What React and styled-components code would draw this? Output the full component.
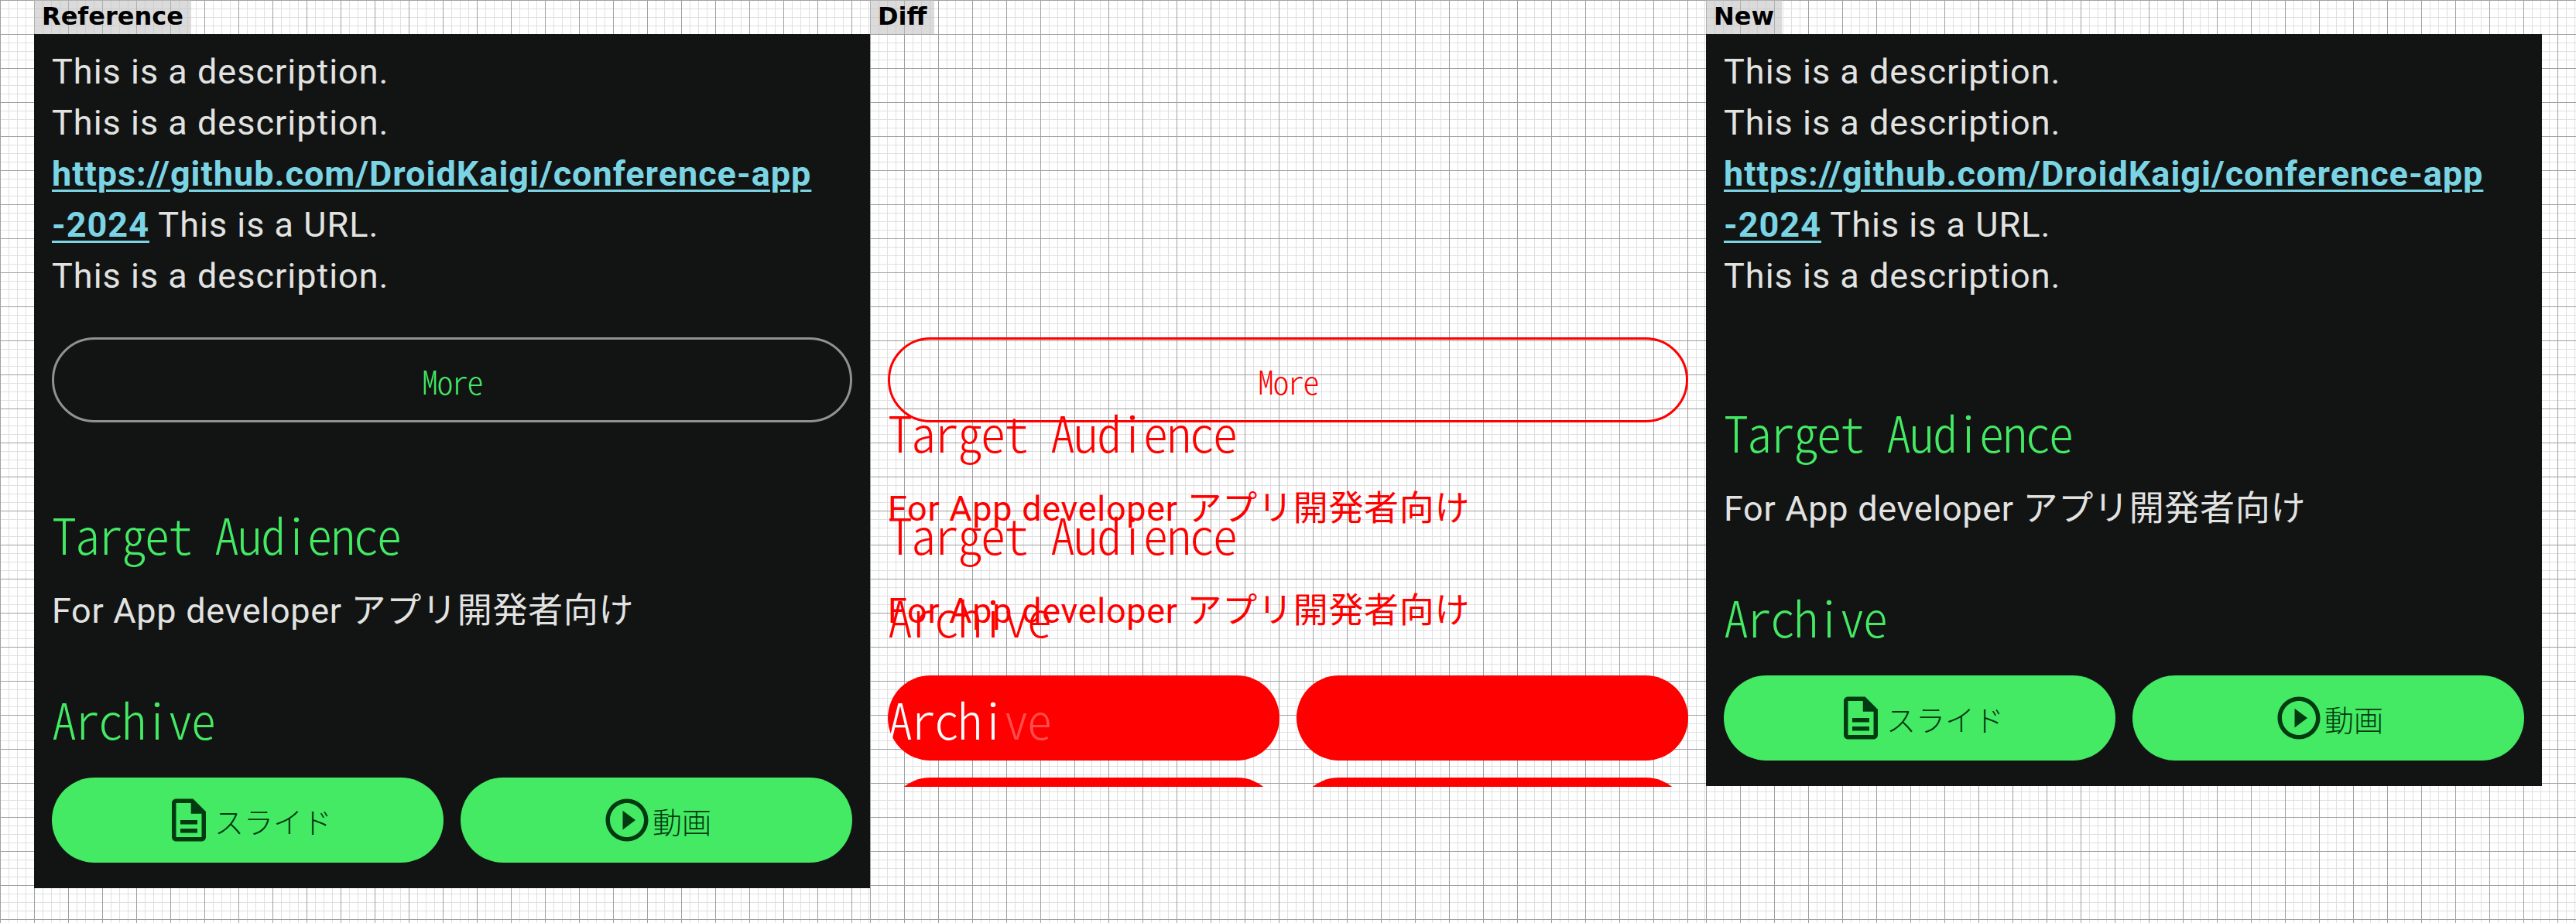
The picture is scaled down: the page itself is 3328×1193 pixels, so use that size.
import React from "react";
import styled, { createGlobalStyle, css } from "styled-components";

const GlobalStyle = createGlobalStyle`
  html, body { margin: 0; padding: 0; background: #fff; }
  body {
    width: 3328px;
    height: 1193px;
    overflow: hidden;
  }
`;

const pixelFont = css`
  font-family: "Noto Sans CJK JP", monospace;
  font-feature-settings: "hwid";
  font-weight: 300;
`;

const Stage = styled.div`
  display: flex;
  height: 1193px;
`;

const Column = styled.section`
  flex: none;
  width: ${(p) => p.$width}px;
  height: 100%;
  padding-left: ${(p) => p.$inset || 0}px;
  box-sizing: border-box;
  background-image:
    linear-gradient(to right, #a0a0a0 1px, transparent 1px),
    linear-gradient(to bottom, #a0a0a0 1px, transparent 1px),
    linear-gradient(to right, #e0e0e0 1px, transparent 1px),
    linear-gradient(to bottom, #e0e0e0 1px, transparent 1px);
  background-size: 44px 44px, 44px 44px, 11px 11px, 11px 11px;
`;

const Frame = styled.div`
  width: 1080px;
`;

const Label = styled.div`
  display: inline-block;
  height: 44px;
  line-height: 42px;
  padding: 0 10px;
  box-sizing: border-box;
  vertical-align: top;
  background: rgba(190, 190, 190, 0.55);
  color: #000;
  font-family: "DejaVu Sans", sans-serif;
  font-weight: 700;
  font-size: 32px;
`;

const Panel = styled.div`
  background: #121414;
`;

const DiffPanel = styled.div`
  position: relative;
  height: 973px;
  overflow: hidden;
`;

const DiffLayer = styled.div`
  position: absolute;
  inset: 0;
`;

const Sheet = styled.div`
  display: flex;
  flex-direction: column;
  padding: 16px 23px 33px;
  color: ${(p) => (p.$diff ? "#ff0000" : "#e2e3e1")};
  font-family: "Roboto", "Noto Sans CJK JP", sans-serif;
`;

const Description = styled.p`
  margin: 0;
  font-size: 45px;
  line-height: 66px;
  letter-spacing: 1px;
  visibility: ${(p) => (p.$diff ? "hidden" : "visible")};
`;

const UrlLink = styled.a`
  color: #7ad4e3;
  font-weight: 700;
  text-decoration: underline;
  text-decoration-thickness: 3px;
  text-underline-offset: 5px;
`;

const MoreButton = styled.button`
  display: block;
  width: 100%;
  height: 110px;
  margin: 46px 0 0;
  padding: 0;
  box-sizing: border-box;
  background: transparent;
  border: 3px solid ${(p) => (p.$diff ? "#ff0000" : "#8e9291")};
  border-radius: 55px;
  color: ${(p) => (p.$diff ? "#ff0000" : "#44ea63")};
  ${pixelFont}
  font-size: 42px;
  letter-spacing: -1.5px;
`;

const Heading = styled.h2`
  margin: 0;
  color: ${(p) => p.$color || (p.$diff ? "#ff0000" : "#44ea63")};
  ${pixelFont}
  font-size: 64px;
  letter-spacing: -2px;
  line-height: 72px;
`;

const Fade = styled.span`
  opacity: 0.3;
`;

const AudienceSection = styled.div`
  margin-top: ${(p) => (p.$afterMore ? "107px" : "131px")};
`;

const AudienceText = styled.p`
  margin: 32px 0 0;
  font-size: 45px;
  line-height: 66px;
  letter-spacing: 0.7px;
`;

const ArchiveSection = styled.div`
  margin-top: 69px;
`;

const Actions = styled.div`
  display: grid;
  grid-template-columns: 1fr 1fr;
  gap: 22px;
  margin-top: 41px;
`;

const Pill = styled.button`
  display: flex;
  align-items: center;
  justify-content: center;
  height: 110px;
  padding: 0;
  border: 0;
  border-radius: 55px;
  background: ${(p) => (p.$diff ? "#ff0000" : "#44ea63")};
  color: ${(p) => (p.$diff ? "#ff0000" : "#003a10")};
  ${pixelFont}
  font-size: 38px;
`;

const Icon = styled.svg`
  width: 66px;
  height: 66px;
  flex: none;
  fill: currentColor;
`;

const DocIcon = () => (
  <Icon viewBox="0 0 24 24">
    <path d="M8 16h8v2H8zm0-4h8v2H8zm6-10H6c-1.1 0-2 .9-2 2v16c0 1.1.89 2 1.99 2H18c1.1 0 2-.9 2-2V8l-6-6zm4 18H6V4h7v5h5v11z" />
  </Icon>
);

const PlayIcon = () => (
  <Icon viewBox="0 0 24 24">
    <path d="M10 16.5l6-4.5-6-4.5zM12 2C6.48 2 2 6.48 2 12s4.48 10 10 10 10-4.48 10-10S17.52 2 12 2zm0 18c-4.41 0-8-3.59-8-8s3.59-8 8-8 8 3.59 8 8-3.59 8-8 8z" />
  </Icon>
);

const Content = ({ more, diff, archive }) => (
  <Sheet $diff={diff}>
    <Description $diff={diff}>
      This is a description.
      <br />
      This is a description.
      <br />
      <UrlLink href="#">
        https://github.com/DroidKaigi/conference-app
        <wbr />
        -2024
      </UrlLink>{" "}
      This is a URL.
      <br />
      This is a description.
    </Description>
    {more && <MoreButton $diff={diff}>More</MoreButton>}
    <AudienceSection $afterMore={more}>
      <Heading $diff={diff}>Target Audience</Heading>
      <AudienceText>For App developer アプリ開発者向け</AudienceText>
    </AudienceSection>
    <ArchiveSection>
      {archive || <Heading $diff={diff}>Archive</Heading>}
      <Actions>
        <Pill $diff={diff}>
          <DocIcon />
          スライド
        </Pill>
        <Pill $diff={diff}>
          <PlayIcon />
          動画
        </Pill>
      </Actions>
    </ArchiveSection>
  </Sheet>
);

export default function App() {
  return (
    <>
      <GlobalStyle />
      <Stage>
        <Column $width={1124} $inset={44}>
          <Frame>
            <Label>Reference</Label>
            <Panel>
              <Content more />
            </Panel>
          </Frame>
        </Column>
        <Column $width={1080}>
          <Frame>
            <Label>Diff</Label>
            <DiffPanel>
              <DiffLayer>
                <Content diff />
              </DiffLayer>
              <DiffLayer>
                <Content
                  diff
                  more
                  archive={
                    <Heading $color="#ffffff">
                      Archi<Fade>ve</Fade>
                    </Heading>
                  }
                />
              </DiffLayer>
            </DiffPanel>
          </Frame>
        </Column>
        <Column $width={1124}>
          <Frame>
            <Label>New</Label>
            <Panel>
              <Content />
            </Panel>
          </Frame>
        </Column>
      </Stage>
    </>
  );
}
